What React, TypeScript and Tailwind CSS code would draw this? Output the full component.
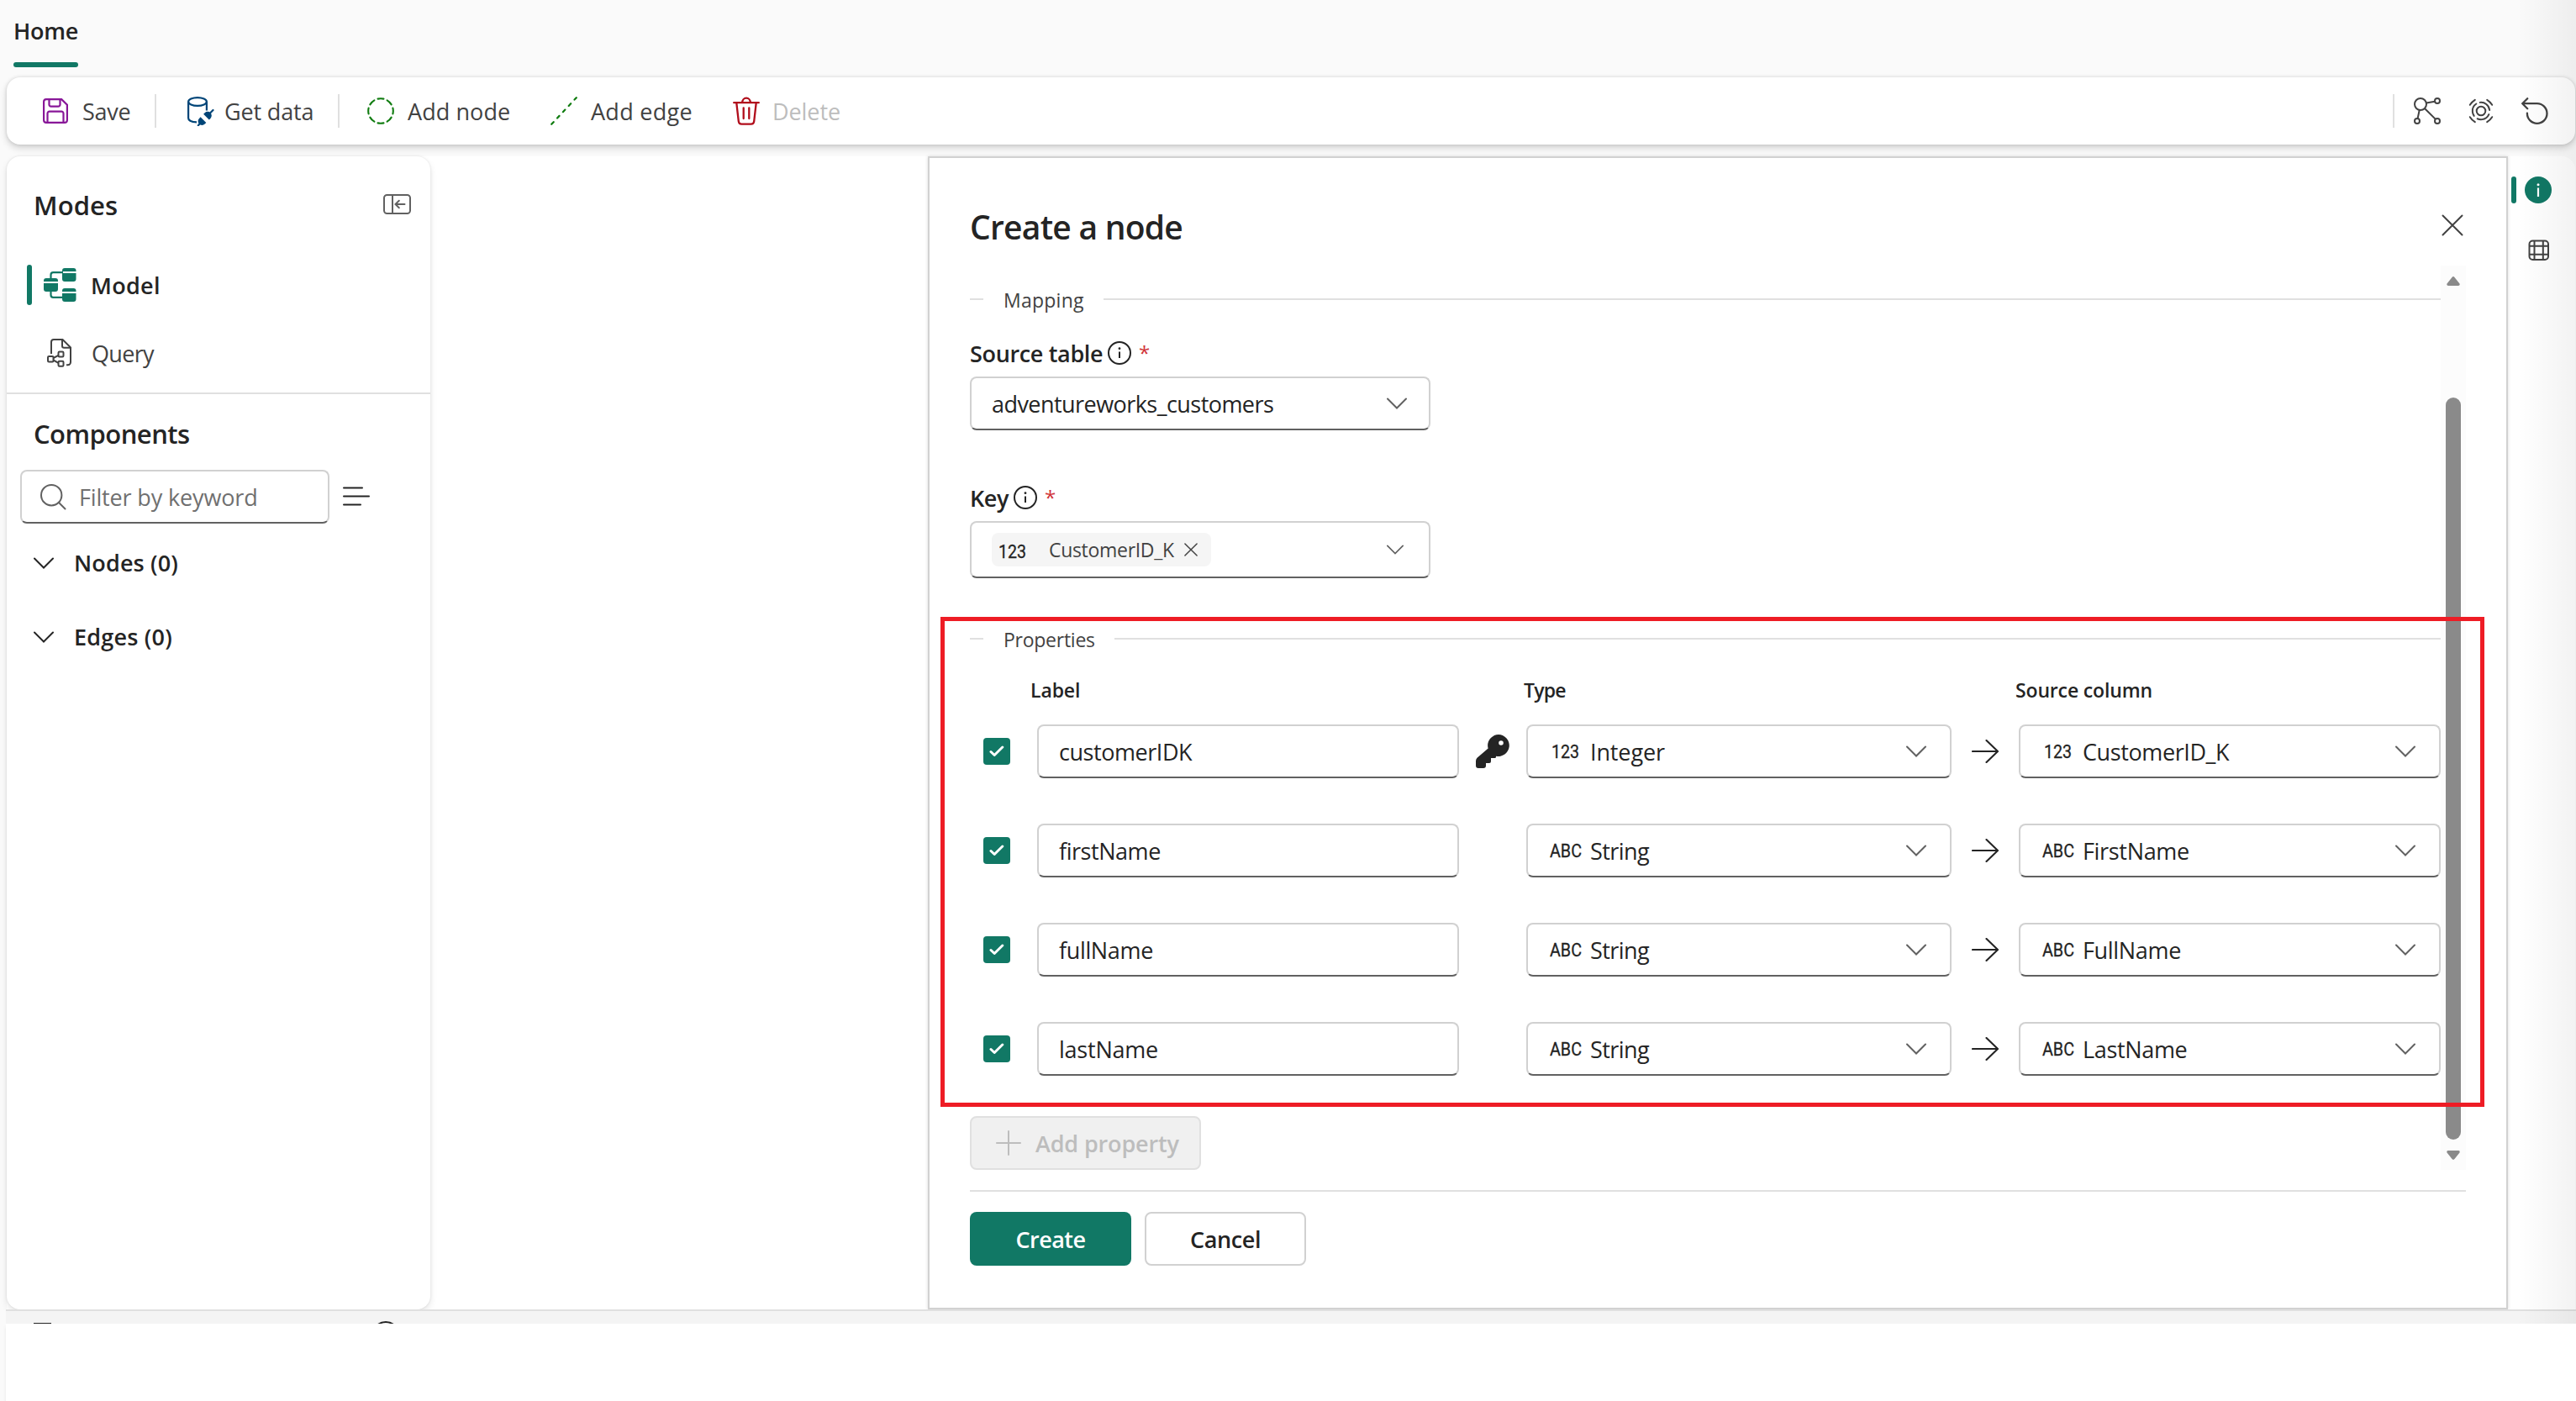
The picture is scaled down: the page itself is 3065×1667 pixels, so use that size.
import { FC, ReactNode } from "react";

type Kind = "123" | "ABC";

interface Property {
  label: string;
  labelClass: string;
  kind: Kind;
  type: string;
  typeClass: string;
  column: string;
  columnClass: string;
  isKey?: boolean;
}

const properties: Property[] = [
  {
    label: "customerIDK",
    labelClass: "tracking-[-0.45px]",
    kind: "123",
    type: "Integer",
    typeClass: "tracking-[-0.12px]",
    column: "CustomerID_K",
    columnClass: "tracking-[-0.4px]",
    isKey: true,
  },
  {
    label: "firstName",
    labelClass: "tracking-[-0.45px]",
    kind: "ABC",
    type: "String",
    typeClass: "tracking-[-0.55px]",
    column: "FirstName",
    columnClass: "tracking-[-0.33px]",
  },
  {
    label: "fullName",
    labelClass: "tracking-[-0.35px]",
    kind: "ABC",
    type: "String",
    typeClass: "tracking-[-0.55px]",
    column: "FullName",
    columnClass: "tracking-[-0.33px]",
  },
  {
    label: "lastName",
    labelClass: "tracking-[-0.23px]",
    kind: "ABC",
    type: "String",
    typeClass: "tracking-[-0.55px]",
    column: "LastName",
    columnClass: "tracking-[-0.33px]",
  },
];

/* icons */

const SaveIcon = () => (
  <svg width="32" height="32" viewBox="0 0 32 32" fill="none" stroke="#881798" strokeWidth="2.2">
    <path d="M5 2.1H23.2L29.9 8.8V27A3 3 0 0 1 26.9 29.9H5A3 3 0 0 1 2.1 27V5A3 3 0 0 1 5 2.1Z" />
    <path d="M8.5 2.5V8.4A2.2 2.2 0 0 0 10.7 10.6H19.3A2.2 2.2 0 0 0 21.5 8.4V2.5" />
    <path d="M6.5 29.5V19A2.4 2.4 0 0 1 8.9 16.6H23.1A2.4 2.4 0 0 1 25.5 19V29.5" />
  </svg>
);

const GetDataIcon = () => (
  <svg width="32" height="36" viewBox="0 0 32 36" fill="none" stroke="#004578" strokeWidth="2.2">
    <ellipse cx="12" cy="7" rx="10.9" ry="4.9" />
    <path d="M1.1 7V26.5C1.1 29.2 5 31.2 11 31.3" />
    <path d="M22.9 7V17.500" />
    <path d="M26.5 21L30.5 17M16.5 31.5L12.8 35.2" strokeLinecap="round" />
    <path d="M20.7 20.2a4.700 4.700 0 0 1 6.700 6.700l-1.600 1.600-6.700-6.700Z" fill="#004578" stroke="none" />
    <path d="M15.600 25.300l6.700 6.700-1.600 1.600a4.700 4.700 0 0 1-6.700-6.700Z" fill="#004578" stroke="none" />
  </svg>
);

const AddNodeIcon = () => (
  <svg width="32" height="32" viewBox="0 0 32 32" fill="none" stroke="#107c10" strokeWidth="2.1">
    <circle
      cx="16"
      cy="16"
      r="14.8"
      pathLength="80"
      strokeDasharray="6.2 3.8"
      strokeDashoffset="3.1"
      strokeLinecap="round"
    />
  </svg>
);

const AddEdgeIcon = () => (
  <svg width="32" height="34" viewBox="0 0 32 34" fill="none" stroke="#107c10" strokeWidth="2.2" strokeLinecap="round">
    <path d="M1.2 32.8L30.8 1.2" strokeDasharray="3.6 6.4" />
  </svg>
);

const TrashIcon = () => (
  <svg
    width="32"
    height="34"
    viewBox="0 0 32 34"
    fill="none"
    stroke="#b10e1c"
    strokeWidth="2.3"
    strokeLinecap="round"
  >
    <path d="M1.2 7.2H30.8M11.2 7A4.8 5.4 0 0 1 20.8 7M4.3 7.5L6.8 29.4A3.6 3.6 0 0 0 10.4 32.6H21.6A3.6 3.6 0 0 0 25.2 29.4L27.7 7.5M12.7 13.5V26M19.3 13.5V26" />
  </svg>
);

const GraphIcon = () => (
  <svg width="32" height="32" viewBox="0 0 32 32" fill="none" stroke="#424242" strokeWidth="2">
    <circle cx="8" cy="8" r="7" />
    <circle cx="28" cy="4" r="3" />
    <circle cx="4" cy="28" r="3" />
    <circle cx="28" cy="28" r="3" />
    <path d="M15 6.6L25 4.8M6.7 15L4.6 25M12.9 13L25.9 25.9" />
  </svg>
);

const TargetIcon = () => (
  <svg width="32" height="32" viewBox="0 0 32 32" fill="none" stroke="#424242" strokeWidth="2" strokeLinecap="round">
    <circle cx="16" cy="16" r="5.3" />
    <circle cx="16" cy="16" r="10.2" strokeDasharray="16.2 5.16" transform="rotate(-97 16 16)" />
    <path d="M2.8 8.8Q5.1 5.1 8.8 2.8M23.2 2.8Q26.9 5.1 29.2 8.8M29.2 23.2Q26.9 26.9 23.2 29.2M8.8 29.2Q5.1 26.9 2.8 23.2" />
  </svg>
);

const UndoIcon = () => (
  <svg
    width="32"
    height="32"
    viewBox="0 0 32 32"
    fill="none"
    stroke="#424242"
    strokeWidth="2.3"
    strokeLinecap="round"
    strokeLinejoin="round"
  >
    <path d="M7.2 1.2L1.2 7.2L7.2 13.2M1.2 7.2H18.7A11.8 11.8 0 1 1 6.9 19V18.6" />
  </svg>
);

const CollapseIcon = () => (
  <svg width="33" height="24" viewBox="0 0 33 24" fill="none" stroke="#616161" strokeWidth="2">
    <rect x="1" y="1" width="31" height="22" rx="3.5" />
    <path d="M11 1V23" />
    <path d="M25.5 12H14.5M18.8 7.8L14.5 12L18.8 16.2" strokeLinecap="round" />
  </svg>
);

const ModelIcon = () => (
  <svg width="39" height="40" viewBox="0 0 39 40" fill="#117865">
    <path d="M8.5 13V8A2.8 2.8 0 0 1 11.3 5.2H23M8.5 27V32A2.8 2.8 0 0 0 11.3 34.8H23" fill="none" stroke="#117865" strokeWidth="2.2" />
    <path d="M25 0H35.5A3 3 0 0 1 38.5 3V4H22V3A3 3 0 0 1 25 0ZM22 6H38.5V13A3 3 0 0 1 35.5 16H25A3 3 0 0 1 22 13Z" />
    <path d="M3 12H14A3 3 0 0 1 17 15V16H0V15A3 3 0 0 1 3 12ZM0 18H17V25A3 3 0 0 1 14 28H3A3 3 0 0 1 0 25Z" />
    <path d="M25 24H35.5A3 3 0 0 1 38.5 27V28H22V27A3 3 0 0 1 25 24ZM22 30H38.5V37A3 3 0 0 1 35.5 40H25A3 3 0 0 1 22 37Z" />
  </svg>
);

const QueryIcon = () => (
  <svg width="30" height="34" viewBox="0 0 30 34" fill="none" stroke="#424242" strokeWidth="2">
    <path d="M5 18V4A3 3 0 0 1 8 1H18.5L28 10.5V28A3.2 3.2 0 0 1 24.8 31.2H23" />
    <path d="M18 1.5V8.5A2.2 2.2 0 0 0 20.2 10.7H27.5" />
    <rect x="1" y="21" width="6.5" height="6.5" rx="1.2" />
    <rect x="13.5" y="15.5" width="6" height="6" rx="1.2" />
    <rect x="13.5" y="26.8" width="6" height="6" rx="1.2" />
    <path d="M7.5 23L13.5 19.8M7.5 25.5L13.5 28.8" />
  </svg>
);

const SearchIcon = () => (
  <svg width="31" height="31" viewBox="0 0 31 31" fill="none" stroke="#616161" strokeWidth="2" strokeLinecap="round">
    <circle cx="13.2" cy="13.2" r="12.2" />
    <path d="M22 22L29.5 29.5" />
  </svg>
);

const KeyIcon = () => (
  <svg width="40" height="40" viewBox="0 0 40 40" fill="#242424">
    <path
      fillRule="evenodd"
      d="M27 0A13 13 0 1 1 24 25.7V26.5Q24 28 22.5 28H18V32Q18 34 16 34H12V37Q12 40 9 40H3Q0 40 0 37V31.5Q0 29.3 1.5 27.8L14.6 16.5A13 13 0 0 1 27 0ZM30 7.2A2.8 2.8 0 1 0 30 12.8A2.8 2.8 0 1 0 30 7.2Z"
    />
  </svg>
);

const Chevron: FC<{ size?: number; color?: string }> = ({ size = 24, color = "#616161" }) => (
  <svg width={size} height={size} viewBox="0 0 24 24" fill="none" stroke={color} strokeWidth="2" strokeLinecap="round">
    <path d="M1 6.5L12 17.5L23 6.5" />
  </svg>
);

const Cross: FC<{ size: number; width: number }> = ({ size, width }) => (
  <svg width={size} height={size} viewBox="0 0 26 26" fill="none" stroke="#424242" strokeWidth={width} strokeLinecap="round">
    <path d="M1.5 1.5L24.5 24.5M24.5 1.5L1.5 24.5" />
  </svg>
);

const InfoIcon = () => (
  <svg width="28" height="28" viewBox="0 0 28 28" fill="none" stroke="#242424" strokeWidth="2">
    <circle cx="14" cy="14" r="13" />
    <path d="M14 12.5V20" />
    <circle cx="14" cy="8.7" r="1.4" fill="#242424" stroke="none" />
  </svg>
);

const ArrowIcon = () => (
  <svg width="32" height="28" viewBox="0 0 32 28" fill="none" stroke="#242424" strokeWidth="2.1" strokeLinecap="round" strokeLinejoin="round">
    <path d="M1 14H31M17.5 1L31 14L17.5 27" />
  </svg>
);

// small data type mark in front of a column or type name
const KindMark: FC<{ kind: Kind }> = ({ kind }) => (
  <svg width="50" height="28" viewBox="0 0 50 28" className="shrink-0 overflow-visible font-['Roboto',sans-serif]">
    <text
      x={kind === "123" ? 3 : 1}
      y="22"
      fontSize="22"
      fill="#242424"
      stroke="#242424"
      strokeWidth="0.3"
      textLength={kind === "123" ? 33 : 38}
      lengthAdjust="spacingAndGlyphs"
    >
      {kind}
    </text>
  </svg>
);

/* form parts */

const boxClass =
  "flex items-center rounded-lg border-2 border-[#d1d1d1] border-b-[#616161] bg-white text-[27px] text-[#242424]";

const Legend: FC<{ children: ReactNode }> = ({ children }) => (
  <div className="flex h-10 items-center">
    <div className="h-[2px] w-4 bg-[#e0e0e0]" />
    <span className="mr-[23px] ml-6 pt-[2px] text-[23px] text-[#424242]">{children}</span>
    <div className="h-[2px] flex-1 bg-[#e0e0e0]" />
  </div>
);

const Select: FC<{ kind: Kind; text: string; textClass: string }> = ({ kind, text, textClass }) => (
  <div className={`${boxClass} h-16 pr-7 pl-[25px]`}>
    <KindMark kind={kind} />
    <span className={`-ml-px flex-1 ${textClass}`}>{text}</span>
    <Chevron />
  </div>
);

const Toolbar: FC = () => (
  <div className="mr-px ml-2 flex h-20 items-center rounded-2xl bg-white pr-8 pl-[42px] text-[27px] text-[#424242] shadow-[0_0_4px_rgba(0,0,0,0.12),0_4px_8px_rgba(0,0,0,0.16)]">
    <div className="flex w-[134px] items-center gap-4">
      <SaveIcon />
      <span className="tracking-[-0.3px]">Save</span>
    </div>
    <div className="h-10 w-[2px] bg-[#e0e0e0]" />
    <div className="ml-[37px] flex w-[179px] items-center gap-3">
      <GetDataIcon />
      <span className="tracking-[-0.15px]">Get data</span>
    </div>
    <div className="h-10 w-[2px] bg-[#e0e0e0]" />
    <div className="ml-[33px] flex w-[218px] items-center gap-4">
      <AddNodeIcon />
      <span className="tracking-[0.08px]">Add node</span>
    </div>
    <div className="flex w-[217px] items-center gap-4">
      <AddEdgeIcon />
      <span className="tracking-[0.3px]">Add edge</span>
    </div>
    <div className="flex items-center gap-[15px] text-[#bdbdbd]">
      <TrashIcon />
      <span className="tracking-[-0.07px]">Delete</span>
    </div>
    <div className="ml-auto flex items-center gap-8">
      <div className="-mr-[9px] h-10 w-[2px] bg-[#e0e0e0]" />
      <GraphIcon />
      <TargetIcon />
      <UndoIcon />
    </div>
  </div>
);

const Sidebar: FC = () => (
  <aside className="w-[504px] rounded-2xl bg-white text-[#242424] shadow-[0_0_3px_rgba(0,0,0,0.1),0_4px_8px_rgba(0,0,0,0.1)]">
    <div className="flex h-[114px] items-center justify-between pr-[23px] pl-8">
      <h2 className="pt-[2px] text-[31px] font-semibold tracking-[0.09px]">Modes</h2>
      <CollapseIcon />
    </div>
    <div className="flex h-[78px] items-center pl-6 text-[27px] font-semibold">
      <div className="h-12 w-[6px] rounded-full bg-[#117865]" />
      <div className="mr-[17px] ml-[14px]">
        <ModelIcon />
      </div>
      <span className="tracking-[0.3px]">Model</span>
    </div>
    <div className="flex h-[84px] items-center pl-12 text-[27px] text-[#424242]">
      <QueryIcon />
      <span className="ml-[23px] tracking-[-0.69px]">Query</span>
    </div>
    <div className="mt-[5px] h-[2px] bg-[#e0e0e0]" />
    <h2 className="flex h-[90px] items-center pt-1 pl-8 text-[31px] font-semibold tracking-[-0.54px]">Components</h2>
    <div className="flex items-center pl-4">
      <div className={`${boxClass} h-16 w-[368px] pl-[22px]`}>
        <SearchIcon />
        <span className="ml-[15px] pt-px tracking-[-0.15px] text-[#707070]">Filter by keyword</span>
      </div>
      <svg className="ml-4" width="32" height="24" fill="none" stroke="#242424" strokeWidth="2" strokeLinecap="round">
        <path d="M1 1.5H23M1 11.5H31M1 21.5H21" />
      </svg>
    </div>
    <div className="flex h-[94px] items-center pl-8 text-[27px] font-semibold">
      <Chevron color="#242424" />
      <span className="ml-6 pb-px tracking-[0.15px]">Nodes (0)</span>
    </div>
    <div className="flex h-[82px] items-center pl-8 text-[27px] font-semibold">
      <Chevron color="#242424" />
      <span className="ml-6 pb-px tracking-[0.2px]">Edges (0)</span>
    </div>
  </aside>
);

const PropertyRow: FC<{ property: Property }> = ({ property }) => (
  <div className="grid h-16 grid-cols-[80px_502px_80px_506px_80px_502px] items-center">
    <div className="ml-4 flex size-8 items-center justify-center rounded bg-[#117865]">
      <svg width="18" height="14" viewBox="0 0 18 14" fill="none" stroke="#fff" strokeWidth="3" strokeLinecap="round" strokeLinejoin="round">
        <path d="M2 7.5L6.2 11.5L15.8 2" />
      </svg>
    </div>
    <div className={`${boxClass} h-16 pl-6`}>
      <span className={property.labelClass}>{property.label}</span>
    </div>
    <div className="flex justify-center">{property.isKey && <KeyIcon />}</div>
    <Select kind={property.kind} text={property.type} textClass={property.typeClass} />
    <div className="flex justify-center">
      <ArrowIcon />
    </div>
    <Select kind={property.kind} text={property.column} textClass={property.columnClass} />
  </div>
);

const Dialog: FC = () => (
  <section className="relative w-[1880px] border-2 border-[#d1d1d1] bg-white px-12 pt-8 text-[#242424] shadow-[0_0_4px_rgba(0,0,0,0.14)]">
    <div className="flex h-24 items-center justify-between pr-[3px]">
      <h1 className="pt-[2px] text-[39px] font-semibold tracking-[-0.75px]">Create a node</h1>
      <Cross size={26} width={2} />
    </div>

    <div className="flex h-[1076px]">
      <div className="w-[1750px] pt-5">
        <Legend>
          <span className="tracking-[0.25px]">Mapping</span>
        </Legend>

        <div className="mt-4 flex h-14 items-center text-[27px] font-semibold">
          <span className="w-[164px] tracking-[-0.34px]">Source table</span>
          <InfoIcon />
          <span className="ml-[9px] text-[24px] font-normal text-[#d13438]">*</span>
        </div>
        <div className={`${boxClass} h-16 w-[548px] justify-between pr-[26px] pl-6`}>
          <span className="tracking-[-0.55px]">adventureworks_customers</span>
          <Chevron />
        </div>

        <div className="mt-[52px] flex h-14 items-center text-[27px] font-semibold">
          <span className="w-[52px] tracking-[-0.39px]">Key</span>
          <InfoIcon />
          <span className="ml-[9px] text-[24px] font-normal text-[#d13438]">*</span>
        </div>
        <div className={`${boxClass} h-[68px] w-[548px] justify-between pr-[30px] pl-6`}>
          <div className="flex h-10 items-center rounded-lg bg-[#f5f5f5] pr-4 pl-[5px] text-[23px] text-[#424242]">
            <div className="pt-[4px]">
              <KindMark kind="123" />
            </div>
            <span className="ml-[13px] w-[152px] tracking-[-0.31px]">CustomerID_K</span>
            <span className="ml-[9px]">
              <Cross size={16} width={2.4} />
            </span>
          </div>
          <Chevron size={20} />
        </div>

        <div className="mt-[52px]">
          <Legend>
            <span className="tracking-[-0.26px]">Properties</span>
          </Legend>
        </div>
        <div className="grid h-[82px] grid-cols-[587px_585px_1fr] items-center pl-[72px] text-[23px] font-semibold">
          <span className="tracking-[-0.1px]">Label</span>
          <span className="tracking-[-0.8px]">Type</span>
          <span className="tracking-[-0.15px]">Source column</span>
        </div>
        <div className="flex flex-col gap-[54px]">
          {properties.map((property) => (
            <PropertyRow key={property.label} property={property} />
          ))}
        </div>

        <button className="mt-12 flex h-16 w-[275px] items-center rounded-lg border-2 border-[#e0e0e0] bg-[#f0f0f0] pl-[29px] text-[27px] font-semibold text-[#bdbdbd]">
          <svg width="30" height="30" stroke="#bdbdbd" strokeWidth="2" strokeLinecap="round">
            <path d="M15 1V29M1 15H29" />
          </svg>
          <span className="ml-[17px] tracking-[-0.15px]">Add property</span>
        </button>
      </div>

      {/* scrollbar */}
      <div className="flex w-[30px] flex-col items-center bg-[#fcfcfc] pt-[13px] pb-3">
        <svg width="16" height="11" fill="#8a8a8a">
          <path d="M6.3 1.2Q8 -1 9.7 1.2L15.5 8.5Q16.3 11 14 11H2Q-0.3 11 0.5 8.5Z" />
        </svg>
        <div className="mt-[133px] h-[883px] w-[18px] rounded-full bg-[#8a8a8a]" />
        <svg className="mt-[13px]" width="16" height="11" fill="#8a8a8a">
          <path d="M6.3 9.8Q8 12 9.7 9.8L15.5 2.5Q16.3 0 14 0H2Q-0.3 0 0.5 2.5Z" />
        </svg>
      </div>
    </div>

    <div className="mt-6 flex gap-4 border-t-2 border-[#e0e0e0] pt-6 text-[27px] font-semibold">
      <button className="h-16 w-48 rounded-lg bg-[#117865] tracking-[-0.53px] text-white">Create</button>
      <button className="h-16 w-48 rounded-lg border-2 border-[#d1d1d1] bg-white tracking-[-0.38px]">Cancel</button>
    </div>

    {/* highlight around the properties */}
    <div className="absolute top-[546px] left-[13px] h-[583px] w-[1837px] border-5 border-[#ee1c25]" />
  </section>
);

const Rail: FC = () => (
  <div className="w-20 rounded-tr-2xl bg-white pt-6">
    <div className="flex items-center pl-1">
      <div className="h-8 w-[6px] rounded-full bg-[#117865]" />
      <svg className="ml-[10px]" width="32" height="32" viewBox="0 0 32 32">
        <circle cx="16" cy="16" r="16" fill="#117865" />
        <circle cx="16" cy="9.7" r="1.5" fill="#fff" />
        <path d="M16 13.5V24" stroke="#fff" strokeWidth="2.2" />
      </svg>
    </div>
    <svg className="mt-[43px] ml-6" width="26" height="26" viewBox="0 0 26 26" fill="none" stroke="#424242" strokeWidth="2">
      <rect x="1.5" y="1.5" width="22.5" height="22.5" rx="4" />
      <path d="M7.5 1.5V24M17.8 1.5V24M1.5 7.7H24M1.5 17.8H24" />
    </svg>
  </div>
);

export default function App() {
  return (
    <div className="relative flex h-[1667px] w-[3065px] flex-col overflow-hidden bg-[#fafafa] font-['Open_Sans',sans-serif] leading-none">
      <header className="h-[92px] shrink-0 pt-4 pl-4">
        <div className="flex h-10 items-center pt-px text-[27px] font-semibold tracking-[-0.25px] text-[#242424]">
          Home
        </div>
        <div className="mt-[18px] h-[6px] w-[77px] rounded-full bg-[#117865]" />
      </header>
      <Toolbar />
      <main className="mt-[14px] mr-px ml-2 flex h-[1372px] rounded-t-2xl bg-white">
        <Sidebar />
        <div className="flex-1" />
        <Dialog />
        <Rail />
      </main>
      <footer className="relative ml-[7px] h-[17px] overflow-hidden border-t-2 border-[#e0e0e0] bg-[#f4f4f4]">
        <svg width="480" height="15" fill="none" stroke="#242424" strokeWidth="2">
          <path d="M33 15H54" />
          <circle cx="452" cy="29" r="16" />
        </svg>
      </footer>
      <div className="relative ml-[7px] flex-1 bg-white shadow-[0_4px_4px_rgba(0,0,0,0.08)]" />

      {/* shade along the right edge */}
      <div className="pointer-events-none absolute top-0 right-0 h-[1575px] w-[70px] bg-linear-to-r from-transparent to-black/5" />
    </div>
  );
}
